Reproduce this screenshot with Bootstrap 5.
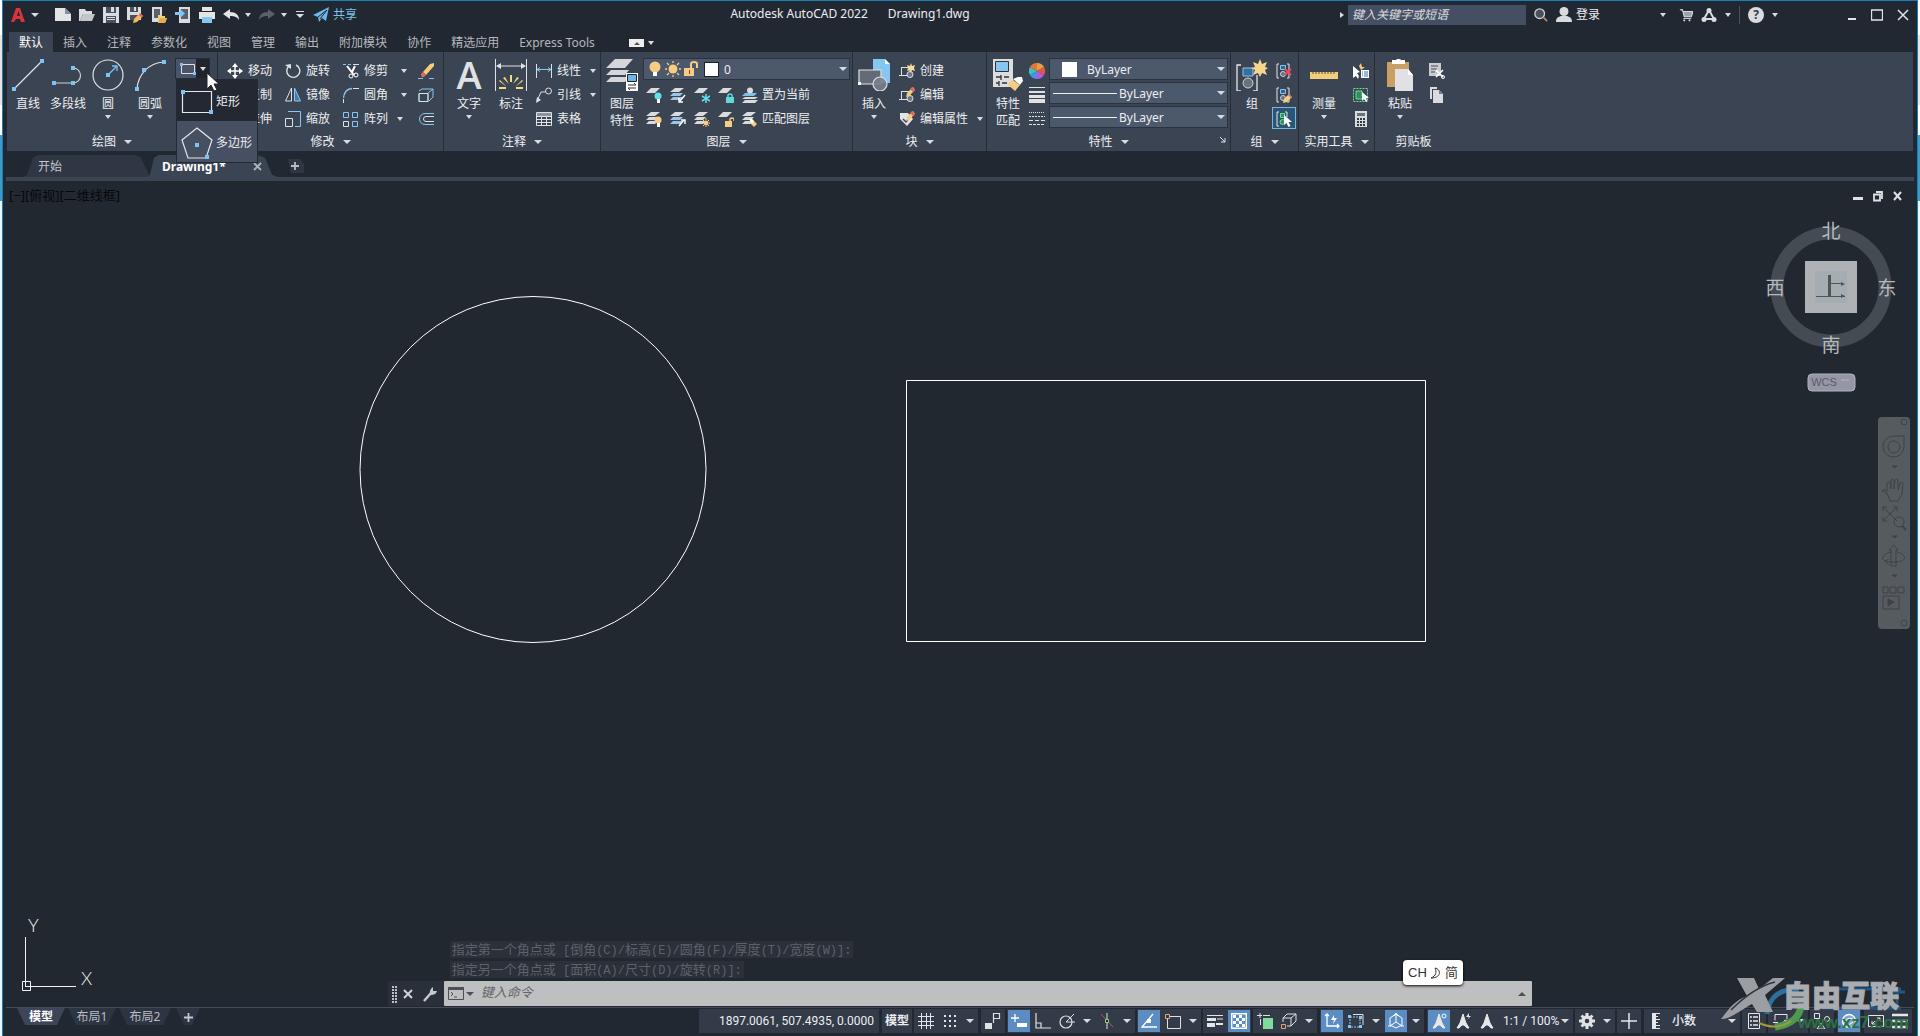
<!DOCTYPE html>
<html lang="zh-CN">
<head>
<meta charset="utf-8">
<meta name="viewport" content="width=device-width, initial-scale=1">
<title>Autodesk AutoCAD 2022 - Drawing1.dwg</title>
<link rel="stylesheet" href="https://cdn.jsdelivr.net/npm/bootstrap@5.3.0/dist/css/bootstrap.min.css">
<style>
:root{--ink:#222831;--panel:#3b4452;--edge:#262d38;--field:#4c586c;--txt:#eceef1;--dim:#b4b8be;--hot:#5b8cc2;--li:#d9dbde}
html,body{height:100%}
body{font:12px/16px "Noto Sans","Noto Sans CJK SC",sans-serif;color:var(--txt);background:linear-gradient(#fff 0 35px,#e4e4e4 35px 105px,#fff 105px 135px,#3a9cc8 135px 201px,#e9f8fc 201px);overflow:hidden}
.app{margin:0 2px;border:1px solid #1a7fb2;border-bottom:0;background:var(--ink);height:100vh;min-width:1500px}
button{border:0;background:none;color:inherit;padding:0;font:inherit;line-height:16px}
a{color:inherit;text-decoration:none}
svg{display:block;flex:none}
.i16{width:16px;height:16px}
.i32{width:32px;height:32px;overflow:visible}
.tri{width:0;height:0;flex:none;border:3px solid transparent;border-top:4px solid var(--li);border-bottom:0}
.tri.big{border-width:4px 4px 0}
.tri.side{border:3px solid transparent;border-left:4px solid var(--li);border-right:0}
.g6{gap:6px}
/* title bar */
.titlebar{height:28px;padding:0 8px}
.quick{gap:8px}
.sharebtn{color:#7cc0ee}
.caption{gap:20px;left:0;right:0;top:5px;pointer-events:none;padding-right:220px}
.search{width:178px;height:20px;border:0;background:#454f63;color:#fff;font-style:italic;padding:0 4px 2px}
.search::placeholder,.cmdbox::placeholder{color:inherit;opacity:.8}
.signin{margin:0 13px 0 60px}
.winbtns{margin-left:70px;gap:14px}
.vline{width:1px;height:18px;background:#4b525e}
/* ribbon tabs */
.rtabs{height:23px;padding-left:6px}
.rtabs a{padding:3px 10px 1px;height:20px;color:var(--dim)}
.rtabs a.on{background:var(--panel);color:#fff}
.minrib{margin:0 0 5px 24px}
.minbtn{width:15px;height:8px;background:#eee}
/* ribbon */
.ribbon{margin:0 4px;height:99px;background:var(--panel)}
.pane{border-right:1px solid var(--edge);position:relative}
.pane .inner{height:73px;margin-top:6px}
.ptitle{height:20px;gap:8px;padding-top:1px}
.p-draw{width:211px}.p-mod{width:226px}.p-anno{width:157px}.p-layer{width:252px}.p-block{width:134px}.p-prop{width:244px}.p-group{width:68px}.p-util{width:76px}.p-clip{width:77px;border:0}
.bigb{width:42px;line-height:17px}
.bigb svg{margin:1px 0 4px}
.bigb .tri{margin-top:3px}
.c38{width:38px}
.rowb{height:24px;gap:5px;white-space:nowrap;padding-top:1px}
.rowb.licons{gap:8px;padding-left:3px}
.col58{width:58px}.col75{width:75px}
.split{width:35px;height:21px;background:#4a556a;border:1px solid #262d38}
.split .drop{background:#1f242d;width:13px;height:19px}
.flyout{left:169px;top:27px;width:82px;background:#474f63;border:1px solid #242a35;z-index:20}
.flyout button{height:41px;padding:2px 4px 0;gap:3px;width:80px;white-space:nowrap}
.flyout button.on{background:#232833}
.arrow{left:199px;top:20px;z-index:30}
.combo{height:22px;background:var(--field);border:1px solid #2b3340;padding:0 2px 0 3px;position:relative;margin-bottom:2px;gap:2px}
.combo select{appearance:none;border:0;background:none;color:var(--txt);font:inherit;padding:1px 0 0;flex:1;min-width:0;line-height:16px}
.w206{width:207px}.w178{width:179px}
.sw{width:13px;height:13px;background:#fff;outline:1px solid #222}
.sw2{width:15px;height:15px;background:#fff;margin:0 8px 0 9px}
.ln{width:64px;height:1px;background:#f0f0f0}
.toggled{background:#2c5573;outline:1px solid #74b6e6;width:22px;height:20px;margin:2px 0}
/* document tabs */
.dtabs{height:26px;padding-left:20px}
.dtabs>*{height:22px;display:flex;align-items:center}
.dt{background:#2f3644;color:#c3c7cd;width:130px;padding:1px 0 0 15px;clip-path:polygon(0 100%,4px 90%,10px 12%,15px 0,112px 0,118px 12%,126px 90%,130px 100%)}
.dt.on{background:var(--panel);color:#fff;font-weight:700;margin-left:-6px;width:131px;clip-path:polygon(0 100%,3px 90%,7px 12%,12px 0,110px 0,118px 12%,125px 90%,131px 100%)}
.bar4{height:4px;margin:0 3px;background:var(--panel)}
/* drawing area */
.model{min-height:300px;position:relative;background:#212830}
.vpl{left:6px;top:6px;color:#07090c;font-size:13px}
.mdi{right:15px;top:9px;gap:10px}
.cube{right:18px;top:37px;width:136px;height:174px}
.cube text{font:19px "Noto Sans CJK SC",sans-serif;fill:#b7babd;text-anchor:middle}
.cube .wcs{font:11px "Liberation Sans",sans-serif;fill:#5a5c68}
.navbarv{right:7px;top:236px;width:32px;height:212px;background:#565b60;border-radius:4px}
.cmd{left:20.1%;right:20.1%;bottom:1px}
.hist{font:13px/20px "Noto Sans CJK SC",sans-serif;color:#5d626a;margin-left:62px}
.hist span{background:#2b3039;display:inline-block;line-height:15px;padding:0 2px}
.hist i{font:12px/14px "Liberation Mono",monospace}
.cmdtools{width:56px;background:#2a303a;gap:6px;padding-left:4px}
.cmdrow{height:25px;margin-top:2px}
.cmdin{background:#bdbfc0;color:#4d4f52;border-radius:1px;padding:0 6px 0 4px}
.cmdin .tri{border-top-color:#4d4f52;margin:0 7px 0 2px}
.cmdbox{border:0;background:none;color:inherit;font:italic 13px/16px "Noto Sans CJK SC",sans-serif;padding:0 0 3px;outline:0}
.ime{right:454px;bottom:22px;height:25px;width:60px;border-radius:4px;background:#fff;color:#333;font:13px/16px "Liberation Sans","Noto Sans CJK SC",sans-serif;box-shadow:0 1px 3px #000;gap:3px}
/* bottom row */
.foot{height:29px;border-top:1px solid #454c57;margin:0 3px;position:relative}
.ltabs{padding-left:11px}
.ltab{height:17px;padding-top:1px;background:#2d3442;color:#b9bdc4;clip-path:polygon(0 0,100% 0,calc(100% - 8px) 100%,8px 100%);width:48px;margin-right:3px}
.ltab.on{background:#3c4658;color:#fff;font-weight:700}
.ltab.wide{width:52px}
.ltab.tiny{width:24px;margin-left:2px}
.sb{padding-right:2px;margin-top:1px;height:24px}
.sg{background:#333b49;margin-left:2px;height:24px}
.sg.w{margin-left:3px}
.sg button{height:24px;display:flex;align-items:center;justify-content:center;white-space:nowrap}
.sg .ic{width:24px}
.sg .dd{width:16px}
.sg .act{background:var(--hot);background-clip:padding-box;border:1px solid transparent}
.sg .num{font-family:Roboto,sans-serif}
.sg .coords{width:180px;padding-right:5px}
.sg .mspace{width:30px}
.sg .zoomf{width:74px}
.sg .units{width:72px}
.wm{right:2px;bottom:0;width:195px;height:60px;pointer-events:none;z-index:9}
</style>
<script src="https://cdn.jsdelivr.net/npm/bootstrap@5.3.0/dist/js/bootstrap.bundle.min.js"></script>
</head>
<body>
<svg width="0" height="0" class="position-absolute" aria-hidden="true"><defs>
<!-- quick access -->
<symbol id="new" viewBox="0 0 16 16"><path d="M0 1h10l6 6v7H0z" fill="#e3e4e6"/><path d="M10 1v6h6" fill="#8b9098"/></symbol>
<symbol id="open" viewBox="0 0 16 16"><path d="M0 14V2h6l1 2h6v3H4L1 14z" fill="#d9dbde"/><path d="M4 7h12l-3 7H1z" fill="#c3c6cb"/></symbol>
<symbol id="save" viewBox="0 0 16 16"><path d="M0 0h16v16H0z" fill="#d9dbde"/><path d="M3 0h10v6H3zM3 9h10v7H3z" fill="#4b515c"/><path d="M8 0h3v5H8zM4 10h8v1H4zM4 12h8v1H4z" fill="#d9dbde"/></symbol>
<symbol id="saveas" viewBox="0 0 16 16"><path d="M0 0h14v13H0z" fill="#d9dbde"/><path d="M3 0h8v5H3zM3 8h9v5H3z" fill="#4b515c"/><path d="M7 0h2v4H7z" fill="#d9dbde"/><path d="M6 16l1-4 6-6 3 3-6 6z" fill="#f4b95e"/><path d="M13 6l3 3-2 1-2-2z" fill="#e25c5c"/></symbol>
<symbol id="mopen" viewBox="0 0 16 16"><path d="M1 0h10v15H1z" fill="#d9dbde"/><path d="M3 2h6v9H3z" fill="#5a616c"/><path d="M7 16V8h3l1 1h3v2h2l-2 5z" fill="#f4cd7a"/><path d="M9 11h7l-2 5H7z" fill="#e2ae4c"/></symbol>
<symbol id="msave" viewBox="0 0 16 16"><path d="M4 0h11v16H4z" fill="#d9dbde"/><path d="M6 2h7v10H6z" fill="#5a616c"/><path d="M0 5h5V2l5 4.500-5 4.500V8H0z" fill="#7fc6f5"/></symbol>
<symbol id="print" viewBox="0 0 16 16"><path d="M3 0h10v4H3zM0 5h16v7H0z" fill="#e3e4e6"/><path d="M3 10h10v6H3z" fill="#86c6f2"/><path d="M3 4h10v1H3z" fill="#222"/></symbol>
<symbol id="undo" viewBox="0 0 16 16"><path d="M0 7l7-5v3c6 0 9 3 9 8-2-3-4-4-9-4v3z" fill="#e3e4e6"/></symbol>
<symbol id="redo" viewBox="0 0 16 16"><path d="M16 7L9 2v3C3 5 0 8 0 13c2-3 4-4 9-4v3z" fill="#59606b"/></symbol>
<symbol id="share" viewBox="0 0 16 16"><path d="M0 8L16 0l-3 14-4-3-3 4-1-5z" fill="#6db7ec"/><path d="M5 10L14 3 7 12" stroke="#222831" fill="none"/></symbol>
<symbol id="mag" viewBox="0 0 16 16"><circle cx="6.500" cy="6.500" r="5.500" fill="#4a505a" stroke="#d0d2d5" stroke-width="1.500"/><path d="M11 11l4 4" stroke="#a98c6b" stroke-width="2"/></symbol>
<symbol id="user" viewBox="0 0 16 16"><circle cx="8" cy="4.500" r="4.500" fill="#d9dbde"/><path d="M0 15c0-5 3-5 5-6h6c2 1 5 1 5 6z" fill="#d9dbde"/></symbol>
<symbol id="cart" viewBox="0 0 16 16"><path d="M1 2h3l2 8h8l2-6H5" fill="#9da1a8" stroke="#d9dbde" stroke-width="1.200"/><path d="M5 12h9" stroke="#d9dbde"/><path d="M5 13h2v2H5zM11 13h2v2h-2z" fill="#d9dbde"/></symbol>
<symbol id="adsk" viewBox="0 0 16 16"><path d="M3 12L8 3l5 9z" fill="none" stroke="#d9dbde" stroke-width="2"/><circle cx="8" cy="3.500" r="2.500" fill="#d9dbde"/><circle cx="3" cy="12.500" r="2.500" fill="#d9dbde"/><circle cx="13" cy="12.500" r="2.500" fill="#d9dbde"/></symbol>
<!-- draw -->
<symbol id="line" viewBox="0 0 32 32"><path d="M2 30L30 2" stroke="#dfe1e4" stroke-width="1.200"/><path d="M0 28h4v4H0zM28 0h4v4h-4z" fill="#7cc4f5"/></symbol>
<symbol id="pline" viewBox="0 0 32 32"><path d="M2 24h19a7 7 0 0 0 0-15" fill="none" stroke="#cfd2d6" stroke-width="1.200"/><path d="M0 22h4v4H0zM19 22h4v4h-4zM19 7h4v4h-4z" fill="#7cc4f5"/></symbol>
<symbol id="circ" viewBox="0 0 32 32"><circle cx="16" cy="16" r="15" fill="none" stroke="#dfe1e4" stroke-width="1.200"/><path d="M16 16l8-8M20 7h5v5" stroke="#7cc4f5" fill="none" stroke-width="1.300"/><path d="M14 14h4v4h-4z" fill="#7cc4f5"/></symbol>
<symbol id="arc" viewBox="0 0 32 32"><path d="M3 30C4 16 14 4 30 3" fill="none" stroke="#dfe1e4" stroke-width="1.200"/><path d="M1 28h4v4H1zM8 9h4v4H8zM28 1h4v4h-4z" fill="#7cc4f5"/></symbol>
<symbol id="rects" viewBox="0 0 16 16"><path d="M1.500 3.500h13v9h-13z" fill="none" stroke="#dfe1e4"/><path d="M0 2h3v3H0zM13 11h3v3h-3z" fill="#7cc4f5"/></symbol>
<symbol id="rectb" viewBox="0 0 32 26"><path d="M1.500 2.500h29v21h-29z" fill="none" stroke="#e6e7e9" stroke-width="1.200"/><path d="M0 1h4v4H0zM28 21h4v4h-4z" fill="#7cc4f5"/></symbol>
<symbol id="poly" viewBox="0 0 32 32"><path d="M16 1l15 12-6 18H7L1 13z" fill="none" stroke="#e6e7e9" stroke-width="1.200"/><path d="M14 16h4v4h-4zM24 28h4v4h-4z" fill="#7cc4f5"/></symbol>
<!-- modify -->
<symbol id="move" viewBox="0 0 16 16"><path d="M8 1v14M1 8h14" stroke="#fff" stroke-width="1.500"/><path d="M8 0l3 4H5zM8 16l3-4H5zM0 8l4-3v6zM16 8l-4-3v6z" fill="#fff"/></symbol>
<symbol id="rot" viewBox="0 0 16 16"><path d="M4 3a6.500 6.500 0 1 0 7-1" fill="none" stroke="#dfe1e4" stroke-width="1.400"/><path d="M0 2l6-1v5z" fill="#dfe1e4"/></symbol>
<symbol id="mirror" viewBox="0 0 16 16"><path d="M6.500 1v13h-6z" fill="none" stroke="#dfe1e4"/><path d="M9.500 1v13h6z" fill="#4a7ba3" stroke="#86c6f2"/></symbol>
<symbol id="scale" viewBox="0 0 16 16"><path d="M.5 7.500h7v8h-7z" fill="none" stroke="#dfe1e4"/><path d="M3 .5h12.500v15H10" fill="none" stroke="#86c6f2"/></symbol>
<symbol id="trim" viewBox="0 0 16 16"><path d="M0 1.500h3m2 0h3" stroke="#86c6f2"/><path d="M10 1.500h6" stroke="#dfe1e4"/><path d="M4 3l7 9M12 3L9 9" stroke="#fff" stroke-width="2"/><circle cx="8" cy="13" r="2" fill="none" stroke="#fff"/><circle cx="13" cy="12" r="2" fill="none" stroke="#fff"/></symbol>
<symbol id="fillet" viewBox="0 0 16 16"><path d="M.5 16v-4M10 1.500h6" stroke="#dfe1e4"/><path d="M.5 11C1 6 4 2 9 1.500" stroke="#86c6f2" fill="none" stroke-width="1.300"/></symbol>
<symbol id="array" viewBox="0 0 16 16"><g fill="none"><path d="M.5 1.500h5v5h-5zM9.500 1.500h5v5h-5zM9.500 10.500h5v5h-5z" stroke="#86c6f2"/><path d="M.5 10.500h5v5h-5z" stroke="#dfe1e4"/></g></symbol>
<symbol id="erase" viewBox="0 0 16 16"><path d="M0 15.500h5m6 0h5" stroke="#7cc4f5"/><path d="M5 9L12 1l4-1v3L8 12z" fill="#f4cd7a"/><path d="M3 11l2-2 3 3-2 2q-3 1-3-3z" fill="#e56a55"/></symbol>
<symbol id="expl" viewBox="0 0 16 16"><path d="M1 6.500h9v8H1zM1 4l3-2h11M11 14l4-4V2M10 6l5-4" fill="none" stroke="#86c6f2"/><path d="M1 6.500h9v8H1z" fill="none" stroke="#dfe1e4"/></symbol>
<symbol id="offs" viewBox="0 0 16 16"><path d="M16 2.500H7a5.500 5.500 0 0 0 0 11h9" fill="none" stroke="#86c6f2"/><path d="M16 5.500H8a2.500 2.500 0 0 0 0 5h8" fill="none" stroke="#dfe1e4"/></symbol>
<!-- annotation -->
<symbol id="dim" viewBox="0 0 32 32"><path d="M.5 0v32M31.500 0v32M2 7h28" stroke="#dfe1e4"/><path d="M1 7l5-3v6zM31 7l-5-3v6z" fill="#dfe1e4"/><g fill="#f2dc7c"><path d="M15 16h2v7h-2zM8 19l2-1 4 7zM24 19l-2-1-4 7zM4 22l1-1 7 7zM28 22l-1-1-7 7zM4 28h7v2H4zM28 28h-7v2h7z"/></g></symbol>
<symbol id="linear" viewBox="0 0 16 16"><path d="M.5 1v14M15.500 1v14" stroke="#dfe1e4"/><path d="M1 6.500h14M4 4.500L1 6.500l3 2M12 4.500l3 2-3 2" stroke="#86c6f2" fill="none"/></symbol>
<symbol id="leader" viewBox="0 0 16 16"><circle cx="12.500" cy="4" r="3" fill="none" stroke="#dfe1e4"/><path d="M9 5H5L1 14" fill="none" stroke="#dfe1e4"/><path d="M0 16l1-6 4 3z" fill="#dfe1e4"/></symbol>
<symbol id="table" viewBox="0 0 16 16"><path d="M1 2h14v3H1z" fill="#8c929b"/><path d="M.5 1.500h15v13H.5zM1 5.500h14M1 8.500h14M1 11.500h14M5.500 5v9M10.500 5v9" fill="none" stroke="#dfe1e4"/></symbol>
<!-- layers -->
<symbol id="sheet3" viewBox="0 0 16 16"><path d="M5 1h9L9 5H0zM3 6h9l-3 3H0zM3 10h9l-3 3H0z" fill="#d9dbde"/></symbol>
<symbol id="sheet3b" viewBox="0 0 16 16"><path d="M5 1h9L9 5H0z" fill="#d9dbde"/><path d="M3 6h10l-3 3H0zM3 10h10l-3 3H0z" fill="#9cc6e4"/></symbol>
<symbol id="sheet1" viewBox="0 0 16 16"><path d="M5 1h9L9 6H0z" fill="#d9dbde"/></symbol>
<symbol id="layers" viewBox="0 0 32 32"><path d="M9 0h18l-8 9H0zM5 11h18l-4 5H0zM5 18h18l-4 5H0z" fill="#d4d6da"/><path d="M20 14h12v18H20z" fill="#fff"/><path d="M21.500 15.500h9v7h-9z" fill="#6cb5ee" stroke="#222"/><path d="M22 26h8l-2-2M30 29h-8l2 2" stroke="#333" fill="none"/></symbol>
<symbol id="bulb" viewBox="0 0 16 16"><circle cx="8" cy="6" r="5.500" fill="#f6cd83"/><path d="M6 11h4v4H6z" fill="#fff"/></symbol>
<symbol id="bulbc" viewBox="0 0 16 16"><circle cx="12" cy="9" r="3.500" fill="#5fe0e8"/><path d="M11 12h3v4h-3z" fill="#fff"/></symbol>
<symbol id="bulby" viewBox="0 0 16 16"><circle cx="12" cy="9" r="3.500" fill="#f6cd83"/><path d="M11 12h3v4h-3z" fill="#fff"/></symbol>
<symbol id="sun" viewBox="0 0 16 16"><circle cx="8" cy="8" r="4.500" fill="#f6cd83"/><path d="M8 0v2M8 14v2M0 8h2M14 8h2M2 2l2 2M12 12l2 2M14 2l-2 2M4 12l-2 2" stroke="#f6cd83" stroke-width="1.300"/></symbol>
<symbol id="unlk" viewBox="0 0 16 16"><path d="M1 7h10v8H1z" fill="#f6cd83"/><path d="M8 7V3q0-2 3-2t3 2v4" fill="none" stroke="#f6cd83" stroke-width="2"/><path d="M6 9h1v4H6z" fill="#a33"/></symbol>
<symbol id="lkc" viewBox="0 0 16 16"><path d="M8 10h8v6H8z" fill="#5fd8dc"/><path d="M10 10V8q2-2 4 0v2" stroke="#5fd8dc" stroke-width="1.500" fill="none"/></symbol>
<symbol id="lky" viewBox="0 0 16 16"><path d="M7 10h7v6H7z" fill="#f6cd83"/><path d="M12 10V8q2-2 4 0v2" stroke="#f6cd83" stroke-width="1.500" fill="none"/></symbol>
<symbol id="snow" viewBox="0 0 16 16"><path d="M12 7v9M8 9l8 5M16 9l-8 5" stroke="#5fe0e8" stroke-width="1.500"/></symbol>
<symbol id="suny" viewBox="0 0 16 16"><circle cx="12" cy="12" r="2.500" fill="#f6cd83"/><path d="M12 7v2M12 15v1M7 12h2M15 12h1M9 9l1 1M15 9l-1 1M9 15l1-1M15 15l-1-1" stroke="#f6cd83"/></symbol>
<symbol id="ard" viewBox="0 0 16 16"><path d="M15 8l-5 6M9 11v4h4" stroke="#fff" fill="none" stroke-width="1.400"/></symbol>
<symbol id="aru" viewBox="0 0 16 16"><path d="M9 15l5-6M11 9h4v4" stroke="#fff" fill="none" stroke-width="1.400"/></symbol>
<symbol id="setcur" viewBox="0 0 16 16"><path d="M3 6h12l-3 3H0z" fill="#7fc0ea"/><path d="M3 10h13l-3 2H0zM3 13h13l-3 3H0z" fill="#d9dbde"/><circle cx="8" cy="3.500" r="3" fill="#d9dbde"/></symbol>
<symbol id="brush" viewBox="0 0 16 16"><path d="M8 8l2 0 5 5-3 3-4-4z" fill="#f6cd83"/><path d="M7 8l3 0 2 2-2 3z" fill="#fff"/></symbol>
<!-- block -->
<symbol id="insert" viewBox="0 0 32 32"><path d="M15 0h12l5 5v19H15z" fill="#86c6f2"/><path d="M27 0v5h5" fill="#dff"/><path d="M1 11h22v14H1z" fill="#646b77" stroke="#dfe1e4" stroke-width="1.200"/><circle cx="22" cy="25" r="7" fill="#7a808a" fill-opacity=".9" stroke="#dfe1e4" stroke-width="1.200"/><path d="M0 23h3v3H0z" fill="#fff"/></symbol>
<symbol id="blk" viewBox="0 0 16 16"><path d="M2 4.500h9v8H0" fill="none" stroke="#dfe1e4"/><path d="M2.500 4v9" stroke="#dfe1e4"/><circle cx="11" cy="11.500" r="3" fill="#707782" stroke="#dfe1e4"/></symbol>
<symbol id="star" viewBox="0 0 16 16"><path d="M12 0l1 3 3-1-1 3 1 3-3-1-1 3-1-3-3 1 1-3-1-3 3 1z" fill="#f6dc9a"/></symbol>
<symbol id="pen" viewBox="0 0 16 16"><path d="M7 10l1-4 6-6 2 3-6 6z" fill="#f4cd7a"/><path d="M13 0l3 3-2 2-3-3z" fill="#e46060"/></symbol>
<symbol id="penlow" viewBox="0 0 16 16"><path d="M7 16l1-4 5-5 3 3-5 5z" fill="#f4cd7a"/><path d="M13 7l3 3-1 1-3-3z" fill="#e46060"/></symbol>
<symbol id="attr" viewBox="0 0 16 16"><path d="M1 2h8l5 6-6 7-7-7z" fill="#e3e4e6"/><path d="M4 8l3 3 4-5" stroke="#3b4452" stroke-width="1.500" fill="none"/></symbol>
<!-- properties -->
<symbol id="match" viewBox="0 0 32 32"><path d="M1 0h20v28H1z" fill="#dcdde0"/><path d="M3.500 2.500h13v10h-13z" fill="#86c6f2" stroke="#333"/><path d="M4 18h5m3 0h5M9 16v5M4 24h3m3 0h5M7 22v5" stroke="#333" stroke-width="1.300"/><path d="M15 25l6-4 7 5-5 6z" fill="#f6cd83"/><path d="M21 20l5-2 4 0 1 4-3 4z" fill="#fff"/></symbol>
<symbol id="lwt" viewBox="0 0 16 16"><path d="M0 0h16v1H0zM0 4h16v2H0zM0 8h16v3H0zM0 12h16v4H0z" fill="#dfe1e4"/></symbol>
<symbol id="ltp" viewBox="0 0 16 16"><g stroke="#dfe1e4"><path d="M0 1.500h16" stroke-dasharray="1 1"/><path d="M0 5.500h16" stroke-dasharray="2 1"/><path d="M0 9.500h16" stroke-dasharray="4 2"/><path d="M0 13.500h16" stroke-dasharray="3 1"/></g></symbol>
<!-- group and utilities -->
<symbol id="grp" viewBox="0 0 32 32"><path d="M5 6H1v26h4M17 32h4V16" fill="none" stroke="#e6e7e9" stroke-width="1.300"/><path d="M7 9h10v8H7z" fill="#3a6d9e" stroke="#86c6f2"/><circle cx="12" cy="24" r="5" fill="#6a717c" stroke="#cfd2d6"/><path d="M24 0l2 5 5-2-2 5 3 1-3 2 2 5-5-2-2 4-2-4-5 2 2-5-4-2 4-1-2-5 5 2z" fill="#f6d58c"/></symbol>
<symbol id="grps" viewBox="0 0 16 16"><path d="M3 1H1v14h2M11 1h2v14h-2" fill="none" stroke="#e6e7e9"/><path d="M4.500 2.500h5v4h-5z" fill="#35648f" stroke="#86c6f2"/><circle cx="7" cy="11" r="2.500" fill="#6a717c" stroke="#cfd2d6"/></symbol>
<symbol id="grpg" viewBox="0 0 16 16"><path d="M3 1H1v14h2M9 1h2v5" fill="none" stroke="#e6e7e9"/><path d="M4.500 2.500h4v4h-4z" fill="#2f8f5a" stroke="#6fdc9a"/><circle cx="6.500" cy="11" r="2.500" fill="#2f8f5a" stroke="#6fdc9a"/></symbol>
<symbol id="redx" viewBox="0 0 16 16"><path d="M9 6l6 6M15 6l-6 6" stroke="#e8485e" stroke-width="2"/></symbol>
<symbol id="cur" viewBox="0 0 16 16"><path d="M8 4v10l2.500-2 2 4 2-1-2-4H16z" fill="#fff"/></symbol>
<symbol id="ruler" viewBox="0 0 32 32"><path d="M2 13h28v7H2z" fill="#f4cd7a"/><path d="M5 13v2M8 13v2M11 13v2M14 13v2M17 13v2M20 13v2M23 13v2M26 13v2" stroke="#55503f"/></symbol>
<symbol id="qsel" viewBox="0 0 16 16"><path d="M0 3v12l3-2 2 3 1-3-2-3 3-1z" fill="#fff"/><path d="M8 7h8v8H8z" fill="#fff"/><path d="M9 9h1M11 9h4M9 11h1M11 11h4M9 13h1M11 13h4" stroke="#2f70b0"/><path d="M8 0l1 4 3 0-4 3-2-4z" fill="#f4cd7a"/></symbol>
<symbol id="selall" viewBox="0 0 16 16"><path d="M.5 1.500h14v13H.5z" fill="none" stroke="#6fdc9a" stroke-dasharray="2 1"/><path d="M3 4h6v5h4v3H3z" fill="#2f8f5a" stroke="#6fdc9a"/><path d="M9 5v9l2-2 2 3 1-1-1-3h3z" fill="#fff"/></symbol>
<symbol id="calc" viewBox="0 0 16 16"><path d="M2 0h12v16H2z" fill="#dadbdd"/><path d="M4 2h8v3H4z" fill="#6b717b"/><path d="M4 7h2v2H4zM7 7h2v2H7zM10 7h2v2h-2zM4 10h2v2H4zM7 10h2v2H7zM10 10h2v2h-2zM4 13h2v2H4zM7 13h2v2H7zM10 13h2v2h-2z" fill="#333a46"/></symbol>
<symbol id="paste" viewBox="0 0 32 32"><path d="M3 3h22v25H3z" fill="#c99f63"/><path d="M8 1h4l1-1h3l1 1h4v4H8z" fill="#fff"/><path d="M11 10h13l5 6v16H11z" fill="#e0e1e4"/><path d="M24 10v6h5" fill="#fff"/></symbol>
<symbol id="cut" viewBox="0 0 16 16"><path d="M0 0h12v13H0z" fill="#c9ccd1"/><path d="M2 3h7M2 6h6M2 9h4" stroke="#444b57"/><path d="M7 7l7 7M14 7l-7 7" stroke="#fff" stroke-width="1.500"/><circle cx="14" cy="14" r="1.500" fill="none" stroke="#fff"/></symbol>
<symbol id="copy" viewBox="0 0 16 16"><path d="M1 0h7v2H3v10H1z" fill="#d9dbde"/><path d="M4 3h6l4 4v9H4z" fill="#d9dbde"/><path d="M10 3v4h4" fill="#777e89"/></symbol>
<!-- status -->
<symbol id="s-grid" viewBox="0 0 16 16"><path d="M3.500 0v16M8.500 0v16M12.500 0v16M0 3.500h16M0 8.500h16M0 12.500h16" stroke="#e3e5e8"/></symbol>
<symbol id="s-snap" viewBox="0 0 16 16"><path d="M2 3h12M2 8h12M2 13h12" stroke="#e3e5e8" stroke-width="2" stroke-dasharray="2 3"/></symbol>
<symbol id="s-inf" viewBox="0 0 16 16"><path d="M0 10h7v6H0z" fill="#dfe1e4"/><path d="M8.500 10V.5h6v5h-6" fill="none" stroke="#dfe1e4" stroke-width="1.200"/></symbol>
<symbol id="s-dyn" viewBox="0 0 16 16"><path d="M4 1v8M0 5h8" stroke="#fff" stroke-width="1.300"/><path d="M6 10h10v4H6z" fill="#fff"/></symbol>
<symbol id="s-ort" viewBox="0 0 16 16"><path d="M1 0v15h15M1 10h5v5" fill="none" stroke="#dfe1e4" stroke-width="1.200"/></symbol>
<symbol id="s-pol" viewBox="0 0 16 16"><circle cx="7" cy="9" r="6" fill="none" stroke="#dfe1e4" stroke-width="1.200"/><path d="M15 1L7 9h9" fill="none" stroke="#dfe1e4"/></symbol>
<symbol id="s-iso" viewBox="0 0 16 16"><path d="M2 1l12 13" stroke="#b25b5b"/><path d="M8 0v16" stroke="#dfe1e4"/><path d="M6.500 6.500h3v3h-3z" fill="#222" stroke="#8fd08f"/></symbol>
<symbol id="s-otr" viewBox="0 0 16 16"><path d="M12 1L1 14h15" fill="none" stroke="#fff" stroke-width="1.300"/><path d="M6 6h4v4H6z" fill="#fff"/></symbol>
<symbol id="s-osn" viewBox="0 0 16 16"><path d="M5 3.500h10.500v12h-13V6" fill="none" stroke="#dfe1e4"/><path d="M.5 1.500h4v4h-4z" fill="none" stroke="#e6a27a"/></symbol>
<symbol id="s-lw" viewBox="0 0 16 16"><path d="M0 2.500h16" stroke="#e3e5e8"/><path d="M0 6.500h9" stroke="#e3e5e8" stroke-width="3"/><path d="M10 6h6" stroke="#e3e5e8"/><path d="M0 12h8" stroke="#e3e5e8" stroke-width="4"/><path d="M9 11h7" stroke="#e3e5e8" stroke-width="2"/></symbol>
<symbol id="s-tra" viewBox="0 0 16 16"><path d="M.7.7h14.600v14.600H.7z" fill="none" stroke="#fff" stroke-width="1.400"/><path d="M2 2h3v3H2zM8 2h3v3H8zM5 5h3v3H5zM11 5h3v3h-3zM2 8h3v3H2zM8 8h3v3H8zM5 11h3v3H5zM11 11h3v3h-3z" fill="#fff"/></symbol>
<symbol id="s-sel" viewBox="0 0 16 16"><path d="M3 0v5M0 2.500h5" stroke="#dfe1e4"/><path d="M6 2.500h7M3.500 6v6" stroke="#dfe1e4"/><path d="M6 5h10v11H6z" fill="#7fdb9c"/></symbol>
<symbol id="s-3do" viewBox="0 0 16 16"><path d="M2 9V5h8v8H6M2 5l4-4h9v7l-5 5M10 5l5-4" fill="none" stroke="#dfe1e4"/><path d="M.5 11.500h4v4h-4z" fill="none" stroke="#e6a27a"/></symbol>
<symbol id="s-ucs" viewBox="0 0 16 16"><path d="M3 1v12h12M1 3l2-2 2 2M13 11l2 2-2 2" fill="none" stroke="#fff" stroke-width="1.300"/><path d="M10 2L7 7h3l-1 4 4-6h-3z" fill="#fff"/></symbol>
<symbol id="s-fil" viewBox="0 0 16 16"><path d="M2 4h10v10H2z" fill="none" stroke="#86c6f2" stroke-dasharray="2 1"/><path d="M5 1.500h10V12" fill="none" stroke="#dfe1e4"/><path d="M0 2h3v3H0zM11 3h3v3h-3zM0 12h3v3H0zM11 12h3v3h-3z" fill="#86c6f2"/></symbol>
<symbol id="s-giz" viewBox="0 0 16 16"><path d="M8 1l6 4v7l-6 3-6-3V5z" fill="none" stroke="#fff"/><path d="M8 2v7l6 4M8 9l-6 4M6 3l2-3 2 3M0 13h3M16 13h-3" fill="none" stroke="#fff"/></symbol>
<symbol id="s-ann" viewBox="0 0 16 16"><path d="M8 1l3 9 3 5h-2l-3-3H7l-3 3H2l3-5z" fill="#e6e7e9" stroke="#e6e7e9"/></symbol>
<symbol id="s-gear" viewBox="0 0 16 16"><path d="M6.500 0h3v3h-3zM6.500 13h3v3h-3zM0 6.500h3v3H0zM13 6.500h3v3h-3zM1.500 3.500l2-2 2 2-2 2zM10.500 12.500l2-2 2 2-2 2zM10.500 3.500l2-2 2 2-2 2zM1.500 12.500l2-2 2 2-2 2z" fill="#dfe1e4"/><circle cx="8" cy="8" r="4" fill="none" stroke="#dfe1e4" stroke-width="3.500"/></symbol>
<symbol id="s-plus" viewBox="0 0 16 16"><path d="M8 0v16M0 8h16" stroke="#e6e7e9" stroke-width="1.500"/></symbol>
<symbol id="s-rul" viewBox="0 0 16 16"><path d="M4 0h8v1H8v2h2v1H8v2h4v1H8v2h2v1H8v2h4v1H8v2h4v1H4z" fill="#e6e7e9"/></symbol>
<symbol id="s-qp" viewBox="0 0 16 16"><path d="M2.500.5h11v15h-11z" fill="none" stroke="#e6e7e9"/><path d="M4 4h2M7 4h5M4 8h2M7 8h5M4 12h2M7 12h5" stroke="#e6e7e9" stroke-width="1.500"/></symbol>
<symbol id="s-lock" viewBox="0 0 16 16"><path d="M1 9.500h5M3 7.500V1.500h12V6" fill="none" stroke="#e6e7e9"/><path d="M8 10h6v5H8z" fill="#fff"/><path d="M12 10V8q2-2 4 0v2" fill="none" stroke="#fff"/></symbol>
<symbol id="s-isol" viewBox="0 0 16 16"><path d="M.5.5h5v5h-5z" fill="none" stroke="#e6e7e9"/><circle cx="13" cy="6" r="2.500" fill="none" stroke="#e6e7e9"/><path d="M7 10l4 6H3z" fill="none" stroke="#e6e7e9"/></symbol>
<symbol id="s-hw" viewBox="0 0 16 16"><circle cx="8" cy="8" r="6.500" fill="#7ea9d4" stroke="#fff" stroke-width="1.300"/><path d="M3 10c2-5 8-6 10-3M6 13l6-4" stroke="#fff" fill="none"/></symbol>
<symbol id="s-fs" viewBox="0 0 16 16"><path d="M.5 2.500h15v11H.5z" fill="none" stroke="#e6e7e9"/><path d="M4 11l3-3M4 8v3h3M12 5L9 8M9 5h3v3" fill="none" stroke="#e6e7e9"/></symbol>
<symbol id="s-menu" viewBox="0 0 16 16"><path d="M0 2h16M0 8h16M0 14h16" stroke="#e6e7e9" stroke-width="2.500"/></symbol>
</defs></svg>

<div class="app d-flex flex-column">
  <header class="titlebar d-flex align-items-center justify-content-between position-relative">
    <div class="quick d-flex align-items-center">
      <button class="d-flex align-items-center g6 me-2" aria-label="应用程序菜单"><svg width="14" height="16" viewBox="0 0 14 16"><path d="M0 15L5 1h4l5 14h-4l-1-3H5l-2 3zM6 9h3L7.500 4z" fill="#d5353b"/></svg><span class="tri big"></span></button>
      <button aria-label="新建"><svg class="i16"><use href="#new"/></svg></button>
      <button aria-label="打开"><svg class="i16"><use href="#open"/></svg></button>
      <button aria-label="保存"><svg class="i16"><use href="#save"/></svg></button>
      <button aria-label="另存为"><svg class="i16"><use href="#saveas"/></svg></button>
      <button aria-label="从移动设备打开"><svg class="i16"><use href="#mopen"/></svg></button>
      <button aria-label="保存到移动设备"><svg class="i16"><use href="#msave"/></svg></button>
      <button aria-label="打印"><svg class="i16"><use href="#print"/></svg></button>
      <button class="d-flex align-items-center g6" aria-label="放弃"><svg class="i16"><use href="#undo"/></svg><span class="tri"></span></button>
      <button class="d-flex align-items-center g6" aria-label="重做"><svg class="i16"><use href="#redo"/></svg><span class="tri"></span></button>
      <button aria-label="自定义"><svg width="10" height="8"><path d="M1 0h8v1H1zM1 3h8L5 7z" fill="#d9dbde"/></svg></button>
      <button class="sharebtn d-flex align-items-center gap-1"><svg class="i16"><use href="#share"/></svg>共享</button>
    </div>
    <div class="caption position-absolute d-flex justify-content-center"><span>Autodesk AutoCAD 2022</span><span>Drawing1.dwg</span></div>
    <div class="d-flex align-items-center">
      <span class="tri side me-1"></span>
      <input class="search me-2" type="text" placeholder="键入关键字或短语" aria-label="键入关键字或短语">
      <button class="me-2" aria-label="搜索"><svg width="14" height="14"><use href="#mag"/></svg></button>
      <button class="d-flex align-items-center gap-1"><svg class="i16"><use href="#user"/></svg>登录</button>
      <span class="tri signin"></span>
      <button aria-label="商店" class="me-2"><svg width="14" height="16"><use href="#cart"/></svg></button>
      <button class="d-flex align-items-center gap-2 me-2" aria-label="Autodesk"><svg class="i16"><use href="#adsk"/></svg><span class="tri"></span></button>
      <span class="vline me-2"></span>
      <button class="d-flex align-items-center gap-2" aria-label="帮助"><svg class="i16" viewBox="0 0 16 16"><circle cx="8" cy="8" r="8" fill="#d9dbde"/><text x="8" y="12" font-size="12" font-weight="700" text-anchor="middle" fill="#333a46">?</text></svg><span class="tri"></span></button>
      <div class="winbtns d-flex align-items-center">
        <button aria-label="最小化"><svg width="9" height="12"><path d="M0 9h8v2H0z" fill="#e3e4e6"/></svg></button>
        <button aria-label="最大化"><svg width="12" height="12"><path d="M.5 1h11v10H.5z" fill="none" stroke="#e3e4e6" stroke-width="1.300"/></svg></button>
        <button aria-label="关闭"><svg width="12" height="12"><path d="M1 1l10 10M11 1L1 11" stroke="#e3e4e6" stroke-width="1.500"/></svg></button>
      </div>
    </div>
  </header>

  <nav class="rtabs d-flex align-items-end">
    <a class="on" href="#">默认</a><a href="#">插入</a><a href="#">注释</a><a href="#">参数化</a><a href="#">视图</a><a href="#">管理</a><a href="#">输出</a><a href="#">附加模块</a><a href="#">协作</a><a href="#">精选应用</a><a href="#">Express Tools</a>
    <button class="minrib d-flex align-items-center gap-1" aria-label="最小化功能区"><svg class="minbtn" viewBox="0 0 15 8"><path d="M5 6h6L8 3z" fill="#555"/></svg><span class="tri"></span></button>
  </nav>

  <section class="ribbon d-flex">
    <div class="pane p-draw">
      <div class="inner d-flex align-items-start">
        <button class="bigb d-flex flex-column align-items-center"><svg class="i32"><use href="#line"/></svg>直线</button>
        <button class="bigb c38 d-flex flex-column align-items-center"><svg class="i32"><use href="#pline"/></svg>多段线</button>
        <button class="bigb d-flex flex-column align-items-center"><svg class="i32"><use href="#circ"/></svg>圆<span class="tri"></span></button>
        <button class="bigb d-flex flex-column align-items-center"><svg class="i32"><use href="#arc"/></svg>圆弧<span class="tri"></span></button>
        <button class="split d-flex align-items-center justify-content-between ps-1 ms-1" aria-label="矩形"><svg class="i16"><use href="#rects"/></svg><span class="drop d-flex align-items-center justify-content-center"><span class="tri"></span></span></button>
      </div>
      <div class="ptitle d-flex align-items-center justify-content-center">绘图<span class="tri big"></span></div>
      <div class="flyout position-absolute">
        <button class="on d-flex align-items-center"><svg width="32" height="26"><use href="#rectb"/></svg>矩形</button>
        <button class="d-flex align-items-center"><svg width="32" height="32"><use href="#poly"/></svg>多边形</button>
      </div>
      <svg class="arrow position-absolute" width="14" height="20" viewBox="0 0 14 20"><path d="M1 1v16l4-4 3 6 3-1-3-6h5z" fill="#fff" stroke="#222"/></svg>
    </div>

    <div class="pane p-mod">
      <div class="inner d-flex g6 justify-content-center">
        <div class="d-flex">
        <div class="col58">
          <button class="rowb d-flex align-items-center"><svg class="i16"><use href="#move"/></svg>移动</button>
          <button class="rowb d-flex align-items-center"><svg class="i16"><use href="#copy"/></svg>复制</button>
          <button class="rowb d-flex align-items-center"><svg class="i16"><use href="#scale"/></svg>拉伸</button>
        </div>
        <div class="col58">
          <button class="rowb d-flex align-items-center"><svg class="i16"><use href="#rot"/></svg>旋转</button>
          <button class="rowb d-flex align-items-center"><svg class="i16"><use href="#mirror"/></svg>镜像</button>
          <button class="rowb d-flex align-items-center"><svg class="i16"><use href="#scale"/></svg>缩放</button>
        </div>
        <div class="col75">
          <button class="rowb d-flex align-items-center"><svg class="i16"><use href="#trim"/></svg>修剪<span class="tri ms-2"></span></button>
          <button class="rowb d-flex align-items-center"><svg class="i16"><use href="#fillet"/></svg>圆角<span class="tri ms-2"></span></button>
          <button class="rowb d-flex align-items-center"><svg class="i16"><use href="#array"/></svg>阵列<span class="tri ms-1"></span></button>
        </div>
        <div>
          <button class="rowb d-flex align-items-center" aria-label="删除"><svg class="i16"><use href="#erase"/></svg></button>
          <button class="rowb d-flex align-items-center" aria-label="分解"><svg class="i16"><use href="#expl"/></svg></button>
          <button class="rowb d-flex align-items-center" aria-label="偏移"><svg class="i16"><use href="#offs"/></svg></button>
        </div>
        </div>
      </div>
      <div class="ptitle d-flex align-items-center justify-content-center">修改<span class="tri big"></span></div>
    </div>

    <div class="pane p-anno">
      <div class="inner d-flex ps-1">
        <button class="bigb d-flex flex-column align-items-center"><svg class="i32" viewBox="0 0 32 32"><text x="16" y="30" font-family="Open Sans" font-size="38" font-weight="600" text-anchor="middle" fill="#dfe1e4">A</text></svg>文字<span class="tri"></span></button>
        <button class="bigb d-flex flex-column align-items-center"><svg class="i32"><use href="#dim"/></svg>标注</button>
        <div class="ps-1">
          <button class="rowb d-flex align-items-center"><svg class="i16"><use href="#linear"/></svg>线性<span class="tri ms-1"></span></button>
          <button class="rowb d-flex align-items-center"><svg class="i16"><use href="#leader"/></svg>引线<span class="tri ms-1"></span></button>
          <button class="rowb d-flex align-items-center"><svg class="i16"><use href="#table"/></svg>表格</button>
        </div>
      </div>
      <div class="ptitle d-flex align-items-center justify-content-center">注释<span class="tri big"></span></div>
    </div>

    <div class="pane p-layer">
      <div class="inner d-flex">
        <button class="bigb d-flex flex-column align-items-center"><svg class="i32"><use href="#layers"/></svg>图层<br>特性</button>
        <div>
          <div class="combo w206 d-flex align-items-center"><svg class="i16"><use href="#bulb"/></svg><svg class="i16"><use href="#sun"/></svg><svg class="i16"><use href="#unlk"/></svg><span class="sw mx-1"></span><select aria-label="图层"><option>0</option></select><span class="tri big"></span></div>
          <div class="rowb licons d-flex align-items-center">
            <button aria-label="关"><svg class="i16"><use href="#sheet1"/><use href="#bulbc"/></svg></button>
            <button aria-label="隔离"><svg class="i16"><use href="#sheet3b"/><use href="#ard"/></svg></button>
            <button aria-label="冻结"><svg class="i16"><use href="#sheet1"/><use href="#snow"/></svg></button>
            <button aria-label="锁定"><svg class="i16"><use href="#sheet1"/><use href="#lkc"/></svg></button>
            <button class="d-flex gap-1"><svg class="i16"><use href="#setcur"/></svg>置为当前</button>
          </div>
          <div class="rowb licons d-flex align-items-center">
            <button aria-label="打开所有图层"><svg class="i16"><use href="#sheet3"/><use href="#bulby"/></svg></button>
            <button aria-label="取消隔离"><svg class="i16"><use href="#sheet3b"/><use href="#aru"/></svg></button>
            <button aria-label="解冻所有图层"><svg class="i16"><use href="#sheet3"/><use href="#suny"/></svg></button>
            <button aria-label="解锁"><svg class="i16"><use href="#sheet1"/><use href="#lky"/></svg></button>
            <button class="d-flex gap-1"><svg class="i16"><use href="#sheet3"/><use href="#brush"/></svg>匹配图层</button>
          </div>
        </div>
      </div>
      <div class="ptitle d-flex align-items-center justify-content-center">图层<span class="tri big"></span></div>
    </div>

    <div class="pane p-block">
      <div class="inner d-flex">
        <button class="bigb d-flex flex-column align-items-center"><svg class="i32"><use href="#insert"/></svg>插入<span class="tri"></span></button>
        <div class="ps-1">
          <button class="rowb d-flex align-items-center"><svg class="i16"><use href="#blk"/><use href="#star"/></svg>创建</button>
          <button class="rowb d-flex align-items-center"><svg class="i16"><use href="#blk"/><use href="#pen"/></svg>编辑</button>
          <button class="rowb d-flex align-items-center"><svg class="i16"><use href="#attr"/><use href="#pen"/></svg>编辑属性<span class="tri ms-1"></span></button>
        </div>
      </div>
      <div class="ptitle d-flex align-items-center justify-content-center">块<span class="tri big"></span></div>
    </div>

    <div class="pane p-prop">
      <div class="inner d-flex">
        <button class="bigb d-flex flex-column align-items-center"><svg class="i32"><use href="#match"/></svg>特性<br>匹配</button>
        <div class="pe-1">
          <button class="rowb d-flex align-items-center" aria-label="颜色"><svg class="i16" viewBox="0 0 16 16"><path d="M8 8V0a8 8 0 0 1 7 4z" fill="#e8a13c"/><path d="M8 8l7-4a8 8 0 0 1 0 8z" fill="#e2574c"/><path d="M8 8l7 4a8 8 0 0 1-7 4z" fill="#b55adb"/><path d="M8 8v8a8 8 0 0 1-7-4z" fill="#4a8fe8"/><path d="M8 8l-7 4a8 8 0 0 1 0-8z" fill="#3cc4b4"/><path d="M8 8L1 4a8 8 0 0 1 7-4z" fill="#e8743c"/></svg></button>
          <button class="rowb d-flex align-items-center" aria-label="线宽"><svg class="i16"><use href="#lwt"/></svg></button>
          <button class="rowb d-flex align-items-center" aria-label="线型"><svg class="i16"><use href="#ltp"/></svg></button>
        </div>
        <div>
          <div class="combo w178 d-flex align-items-center"><span class="sw2"></span><select aria-label="对象颜色"><option>ByLayer</option></select><span class="tri big"></span></div>
          <div class="combo w178 d-flex align-items-center"><span class="ln"></span><select aria-label="线宽"><option>ByLayer</option></select><span class="tri big"></span></div>
          <div class="combo w178 d-flex align-items-center"><span class="ln"></span><select aria-label="线型"><option>ByLayer</option></select><span class="tri big"></span></div>
        </div>
      </div>
      <div class="ptitle d-flex align-items-center justify-content-center">特性<span class="tri big"></span></div>
      <svg class="position-absolute bottom-0 end-0 mb-2 me-1" width="6" height="6"><path d="M0 0l5 5M5 1v4H1" stroke="#dfe1e4" fill="none"/></svg>
    </div>

    <div class="pane p-group">
      <div class="inner d-flex">
        <button class="bigb d-flex flex-column align-items-center"><svg class="i32"><use href="#grp"/></svg>组</button>
        <div class="d-flex flex-column align-items-center">
          <button class="rowb d-flex align-items-center" aria-label="解除编组"><svg class="i16"><use href="#grps"/><use href="#redx"/></svg></button>
          <button class="rowb d-flex align-items-center" aria-label="组编辑"><svg class="i16"><use href="#grps"/><use href="#penlow"/></svg></button>
          <button class="rowb toggled d-flex align-items-center justify-content-center" aria-label="启用组选择"><svg class="i16"><use href="#grpg"/><use href="#cur"/></svg></button>
        </div>
      </div>
      <div class="ptitle d-flex align-items-center justify-content-center">组<span class="tri big"></span></div>
    </div>

    <div class="pane p-util">
      <div class="inner d-flex ps-1">
        <button class="bigb d-flex flex-column align-items-center"><svg class="i32"><use href="#ruler"/></svg>测量<span class="tri"></span></button>
        <div class="ps-2">
          <button class="rowb d-flex align-items-center" aria-label="快速选择"><svg class="i16"><use href="#qsel"/></svg></button>
          <button class="rowb d-flex align-items-center" aria-label="全部选择"><svg class="i16"><use href="#selall"/></svg></button>
          <button class="rowb d-flex align-items-center" aria-label="快速计算器"><svg class="i16"><use href="#calc"/></svg></button>
        </div>
      </div>
      <div class="ptitle d-flex align-items-center justify-content-center">实用工具<span class="tri big"></span></div>
    </div>

    <div class="pane p-clip">
      <div class="inner d-flex ps-1">
        <button class="bigb d-flex flex-column align-items-center"><svg class="i32"><use href="#paste"/></svg>粘贴<span class="tri"></span></button>
        <div class="ps-2">
          <button class="rowb d-flex align-items-center" aria-label="剪切"><svg class="i16"><use href="#cut"/></svg></button>
          <button class="rowb d-flex align-items-center" aria-label="复制"><svg class="i16"><use href="#copy"/></svg></button>
        </div>
      </div>
      <div class="ptitle d-flex align-items-center justify-content-center">剪贴板</div>
    </div>
  </section>

  <nav class="dtabs d-flex align-items-end">
    <a class="dt" href="#">开始</a>
    <a class="dt on" href="#">Drawing1*<svg class="ms-auto me-3" width="9" height="9"><path d="M1 1l7 7M8 1L1 8" stroke="#aeb3ba" stroke-width="1.800"/></svg></a>
    <button class="ps-2" aria-label="新图形"><svg width="18" height="16"><path d="M2 1h12l4 5v9H5z" fill="#2f3644"/><path d="M9 4v8M5 8h8" stroke="#b9bdc4" stroke-width="1.800"/></svg></button>
  </nav>
  <div class="bar4"></div>

  <main class="model flex-grow-1">
    <svg class="position-absolute top-0 start-0 w-100 h-100" aria-label="模型空间">
      <circle cx="530" cy="288.500" r="173" fill="none" stroke="#fff"/>
      <path d="M903.500 199.500h519v261h-519z" fill="none" stroke="#fff"/>
    </svg>
    <span class="vpl position-absolute">[−][俯视][二维线框]</span>
    <div class="mdi position-absolute d-flex">
      <button aria-label="最小化视口"><svg width="10" height="12"><path d="M0 7h10v3H0z" fill="#dfe1e4"/></svg></button>
      <button aria-label="还原视口"><svg width="10" height="12"><path d="M1 4.500h6v6H1zM3 2h6v7" fill="none" stroke="#dfe1e4" stroke-width="1.800"/></svg></button>
      <button aria-label="关闭视口"><svg width="9" height="12"><path d="M1 2l7 8M8 2l-7 8" stroke="#dfe1e4" stroke-width="2"/></svg></button>
    </div>
    <svg class="cube position-absolute" viewBox="0 0 136 174">
      <circle cx="68" cy="69" r="54" fill="none" stroke="#454b53" stroke-width="13"/>
      <path d="M42 43h52v52H42z" fill="#afb2b4"/><path d="M52 53h32v32H52z" fill="#a3adb2"/>
      <path d="M53 78.500h29M68 65.500h10" stroke="#4e5458" stroke-width="1"/><path d="M65 57h3v22h-3z" fill="#4e5458"/><path d="M78 64l4 2-4 2zM78 76l4 2-4 2z" fill="#4e5458"/>
      <text x="68" y="20">北</text><text x="68" y="134">南</text><text x="12" y="77">西</text><text x="124" y="77">东</text>
      <rect x="45" y="156" width="47" height="17" rx="4" fill="#9597a6" stroke="#b0b2c0"/>
      <text class="wcs" x="61" y="168">WCS</text><path d="M78 162h8" stroke="#b4b6c2"/>
    </svg>
    <div class="navbarv position-absolute">
      <svg width="32" height="212" viewBox="0 0 32 212" fill="none" stroke="#3e4349"><circle cx="26" cy="5" r="3"/><circle cx="26" cy="206" r="3"/>
        <path d="M16 19h10v11a10.500 10.500 0 1 1-10-11z"/><circle cx="16" cy="30" r="6"/><path d="M14 49h5l-2 2zM14 119h5l-2 2zM14 158h5l-2 2z" fill="#3e4349"/>
        <path d="M9 76l-5-2q2-3 5 0V66q2-2 3 0l1 6V63q2-2 3 0v9l1-9q2-2 3 0l0 10 2-7q2-2 3 0l-1 11-4 7h-8z"/>
        <path d="M5 90l14 14M19 90L5 104M5 90v4M5 90h4M19 90v4M19 90h-4M5 104v-4M5 104h4"/><circle cx="21" cy="105" r="5"/><path d="M24 109l4 4" stroke-width="2"/>
        <path d="M13 149v-16h-2l5-5 4 5h-2v16zM13 135c-12 3-10 10 0 10h6c10-1 10-7 0-10M11 142l-4 2 4 4"/>
        <path d="M5 170h5v6H5zM12 170h6v6h-6zM20 170h6v6h-6zM5 179h16v13H5z"/><path d="M10 182l6 3-6 4z" fill="#3e4349"/></svg>
    </div>
    <svg class="position-absolute bottom-0 start-0" width="110" height="100" viewBox="0 0 110 100"><path d="M22.500 30v50M22 79.500h51M19.500 74.500h8v9h-8z" fill="none" stroke="#f2f2f2"/><text x="25" y="25" font-family="Lato" font-weight="300" font-size="18" fill="#f2f2f2">Y</text><text x="78" y="78" font-family="Lato" font-weight="300" font-size="18" fill="#f2f2f2">X</text></svg>
    <div class="cmd position-absolute">
      <div class="hist"><span>指定第一个角点或<i> [</i>倒角<i>(C)/</i>标高<i>(E)/</i>圆角<i>(F)/</i>厚度<i>(T)/</i>宽度<i>(W)]:</i></span></div>
      <div class="hist"><span>指定另一个角点或<i> [</i>面积<i>(A)/</i>尺寸<i>(D)/</i>旋转<i>(R)]:</i></span></div>
      <div class="cmdrow d-flex">
        <div class="cmdtools d-flex align-items-center"><svg width="5" height="18"><path d="M1 1v17M4 1v17" stroke="#bfc2c6" stroke-width="2" stroke-dasharray="2 1"/></svg><button aria-label="关闭命令行"><svg width="10" height="10"><path d="M1 1l8 8M9 1L1 9" stroke="#d0d2d5" stroke-width="2"/></svg></button><button class="ms-1" aria-label="自定义命令行"><svg width="14" height="16" viewBox="0 0 14 16"><path d="M1 15l7-8" stroke="#c4c7cb" stroke-width="2.500"/><path d="M7 8q-1-4 3-7v4h4q-1 4-6 4z" fill="#c4c7cb"/></svg></button></div>
        <div class="cmdin d-flex align-items-center flex-grow-1"><svg width="16" height="13"><path d="M.5.5h15v12H.5z" fill="none" stroke="#4d4f52"/><path d="M0 0h16v3H0z" fill="#4d4f52"/><path d="M3 5l2 2-2 2M6 10h3" stroke="#4d4f52" fill="none"/></svg><span class="tri big"></span><input class="cmdbox flex-grow-1" type="text" placeholder="键入命令" aria-label="键入命令"><svg width="8" height="4"><path d="M0 4h8L4 0z" fill="#4d4f52"/></svg></div>
      </div>
    </div>
    <div class="ime position-absolute d-flex align-items-center justify-content-center">CH<svg width="12" height="12" viewBox="0 0 12 12"><path d="M5 1c6 1 7 10-4 10 5-2 6-6 4-10z" fill="none" stroke="#333"/></svg>简</div>
  </main>

  <footer class="foot d-flex justify-content-between align-items-start">
    <nav class="ltabs d-flex"><a class="ltab on d-flex justify-content-center" href="#">模型</a><a class="ltab d-flex justify-content-center" href="#">布局1</a><a class="ltab wide d-flex justify-content-center" href="#">布局2</a><button class="ltab tiny d-flex justify-content-center align-items-center" aria-label="新建布局"><svg width="9" height="9"><path d="M4.500 0v9M0 4.500h9" stroke="#c3c6cb" stroke-width="1.800"/></svg></button></nav>
    <div class="sb d-flex">
      <div class="sg"><button class="num coords justify-content-end">1897.0061, 507.4935, 0.0000</button></div>
      <div class="sg w"><button class="mspace fw-bold">模型</button></div>
      <div class="sg d-flex"><button class="ic" aria-label="栅格"><svg class="i16"><use href="#s-grid"/></svg></button><button class="ic" aria-label="捕捉"><svg class="i16"><use href="#s-snap"/></svg></button><button class="dd" aria-label="捕捉选项"><span class="tri big"></span></button></div>
      <div class="sg w d-flex"><button class="ic" aria-label="推断约束"><svg class="i16"><use href="#s-inf"/></svg></button></div>
      <div class="sg d-flex"><button class="ic act" aria-label="动态输入"><svg class="i16"><use href="#s-dyn"/></svg></button><button class="ic" aria-label="正交"><svg class="i16"><use href="#s-ort"/></svg></button><button class="ic" aria-label="极轴追踪"><svg class="i16"><use href="#s-pol"/></svg></button><button class="dd" aria-label="极轴选项"><span class="tri big"></span></button><button class="ic" aria-label="等轴测草图"><svg class="i16"><use href="#s-iso"/></svg></button><button class="dd" aria-label="等轴测选项"><span class="tri big"></span></button></div>
      <div class="sg d-flex"><button class="ic act" aria-label="对象捕捉追踪"><svg class="i16"><use href="#s-otr"/></svg></button><button class="ic" aria-label="对象捕捉"><svg class="i16"><use href="#s-osn"/></svg></button><button class="dd" aria-label="对象捕捉选项"><span class="tri big"></span></button></div>
      <div class="sg d-flex"><button class="ic" aria-label="线宽显示"><svg class="i16"><use href="#s-lw"/></svg></button><button class="ic act" aria-label="透明度"><svg class="i16"><use href="#s-tra"/></svg></button></div>
      <div class="sg d-flex"><button class="ic" aria-label="选择循环"><svg class="i16"><use href="#s-sel"/></svg></button><button class="ic" aria-label="三维对象捕捉"><svg class="i16"><use href="#s-3do"/></svg></button><button class="dd" aria-label="三维捕捉选项"><span class="tri big"></span></button></div>
      <div class="sg w d-flex"><button class="ic act" aria-label="动态 UCS"><svg class="i16"><use href="#s-ucs"/></svg></button><button class="ic" aria-label="选择过滤"><svg class="i16"><use href="#s-fil"/></svg></button><button class="dd" aria-label="过滤选项"><span class="tri big"></span></button><button class="ic act" aria-label="小控件"><svg class="i16"><use href="#s-giz"/></svg></button><button class="dd" aria-label="小控件选项"><span class="tri big"></span></button></div>
      <div class="sg w d-flex"><button class="ic act" aria-label="注释可见性"><svg class="i16"><use href="#s-ann"/><circle cx="13" cy="3" r="2" fill="none" stroke="#fff"/></svg></button><button class="ic" aria-label="自动缩放"><svg class="i16"><use href="#s-ann"/><path d="M14 0l-3 4h3l-2 3 4-4h-2z" fill="#dfe1e4"/></svg></button><button class="ic" aria-label="注释比例"><svg class="i16"><use href="#s-ann"/></svg></button><button class="num zoomf justify-content-between px-1">1:1 / 100%<span class="tri big"></span></button></div>
      <div class="sg d-flex"><button class="ic" aria-label="切换工作空间"><svg class="i16"><use href="#s-gear"/></svg></button><button class="dd" aria-label="工作空间"><span class="tri big"></span></button></div>
      <div class="sg d-flex"><button class="ic" aria-label="注释监视器"><svg class="i16"><use href="#s-plus"/></svg></button></div>
      <div class="sg w d-flex"><button class="ic" aria-label="单位"><svg class="i16"><use href="#s-rul"/></svg></button><button class="units justify-content-between ps-1 pe-1 fw-medium">小数<span class="tri big"></span></button></div>
      <div class="sg d-flex"><button class="ic" aria-label="快捷特性"><svg class="i16"><use href="#s-qp"/></svg></button></div>
      <div class="sg d-flex"><button class="ic" aria-label="锁定用户界面"><svg class="i16"><use href="#s-lock"/></svg></button><button class="dd" aria-label="锁定选项"><span class="tri big"></span></button></div>
      <div class="sg d-flex"><button class="ic" aria-label="隔离对象"><svg class="i16"><use href="#s-isol"/></svg></button></div>
      <div class="sg w d-flex"><button class="ic act" aria-label="图形性能"><svg class="i16"><use href="#s-hw"/></svg></button></div>
      <div class="sg w d-flex"><button class="ic" aria-label="全屏显示"><svg class="i16"><use href="#s-fs"/></svg></button><button class="ic" aria-label="自定义"><svg class="i16"><use href="#s-menu"/></svg></button></div>
    </div>
    <svg class="wm position-absolute" viewBox="0 0 195 60">
      <g fill="none"><path d="M50 38c2-18 14-26 32-24" stroke="#2f6f9f" stroke-width="5"/><path d="M84 27c0 14-10 22-26 24" stroke="#4c9a4c" stroke-width="7"/><path d="M42 47q18 8 32-2" stroke="#a39a3c" stroke-width="2"/><path d="M100 13h84M180 14v18M176 16h12M106 32h78" stroke="#1f5686" stroke-width="3"/></g>
      <path d="M20 2h17l5 11L56 2h12L48 19l8 17H40l-5-8C24 34 12 44 4 43c8-10 14-19 26-23z" fill="#9b9ea2"/><path d="M14 34C26 22 42 10 58 6" stroke="#30363f" stroke-width="1.500" fill="none"/>
      <text x="81" y="52" font-family="Liberation Sans" font-weight="700" font-size="17" fill="#2c7040">www.xz7.com</text>
      <text x="66" y="31" font-family="Noto Sans CJK SC" font-weight="900" font-size="29" fill="#a9acb0" stroke="#a9acb0">自由互联</text>
    </svg>
  </footer>
</div>
</body>
</html>
